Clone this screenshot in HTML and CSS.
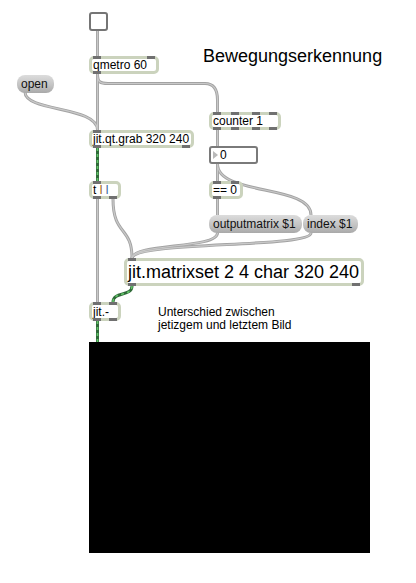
FILE: index.html
```html
<!DOCTYPE html>
<html>
<head>
<meta charset="utf-8">
<link rel="stylesheet" href="styles.css">
</head>
<body>
<div class="patch">
  <svg class="cords" width="416" height="583" viewBox="0 0 416 583">
    <g class="gray">
      <path d="M97.5 31 L97.5 56"/>
      <path d="M97.5 74 L97.5 130"/>
      <path d="M97.5 74 C97.5 82 100 83.5 108 83.5 L205 83.5 C214 83.5 217.5 90 217.5 100 L217.5 112"/>
      <path d="M25 92 C25 112 97.5 106 97.5 130"/>
      <path d="M97.5 199 L97.5 302"/>
      <path d="M113 199 C113 236 132 226 132 258"/>
      <path d="M217.5 130 L217.5 146"/>
      <path d="M217.5 164 L217.5 181"/>
      <path d="M217.5 164 C217.5 196 311 184 311 215"/>
      <path d="M217.5 199 L217.5 215"/>
      <path d="M217.5 233 C217.5 249 133 243 132 258"/>
      <path d="M311 233 C311 248 136 241 132 258"/>
    </g>
    <g class="gray-hi">
      <path d="M97.5 31 L97.5 56"/>
      <path d="M97.5 74 L97.5 130"/>
      <path d="M97.5 74 C97.5 82 100 83.5 108 83.5 L205 83.5 C214 83.5 217.5 90 217.5 100 L217.5 112"/>
      <path d="M25 92 C25 112 97.5 106 97.5 130"/>
      <path d="M97.5 199 L97.5 302"/>
      <path d="M113 199 C113 236 132 226 132 258"/>
      <path d="M217.5 130 L217.5 146"/>
      <path d="M217.5 164 L217.5 181"/>
      <path d="M217.5 164 C217.5 196 311 184 311 215"/>
      <path d="M217.5 199 L217.5 215"/>
      <path d="M217.5 233 C217.5 249 133 243 132 258"/>
      <path d="M311 233 C311 248 136 241 132 258"/>
    </g>
    <g class="green">
      <path d="M97.5 148 L97.5 181"/>
      <path d="M132 286 C132 297 113 291 113 302"/>
      <path d="M97.5 321 L97.5 342"/>
    </g>
    <g class="green-hi">
      <path d="M97.5 148 L97.5 181"/>
      <path d="M132 286 C132 297 113 291 113 302"/>
      <path d="M97.5 321 L97.5 342"/>
    </g>
  </svg>

  <div class="toggle n-toggle"></div>

  <div class="title">Bewegungserkennung</div>

  <div class="obj n-qmetro"><span>qmetro 60</span><i class="in l"></i><i class="in r"></i><i class="out l"></i></div>

  <div class="msg n-open"><span>open</span></div>

  <div class="obj n-counter"><span>counter 1</span>
    <i class="in l"></i><i class="in c1"></i><i class="in c2"></i><i class="in r"></i>
    <i class="out l"></i><i class="out c1"></i><i class="out c2"></i><i class="out r"></i>
  </div>

  <div class="obj n-grab"><span>jit.qt.grab 320 240</span><i class="in l"></i><i class="out l"></i><i class="out r"></i></div>

  <div class="num n-num"><b class="tri"></b><span>0</span></div>

  <div class="obj n-t"><span>t <em class="o">l</em> <em class="b">l</em></span><i class="in l"></i><i class="out l"></i><i class="out r"></i></div>

  <div class="obj n-eq"><span>== 0</span><i class="in l"></i><i class="in r"></i><i class="out l"></i></div>

  <div class="msg n-outm"><span>outputmatrix $1</span></div>
  <div class="msg n-index"><span>index $1</span></div>

  <div class="obj big n-mset"><span>jit.matrixset 2 4 char 320 240</span><i class="in l"></i><i class="out l"></i><i class="out r"></i></div>

  <div class="obj n-minus"><span>jit.-</span><i class="in l"></i><i class="in r"></i><i class="out l"></i><i class="out r"></i></div>

  <div class="comment">Unterschied zwischen<br>jetizgem und letztem Bild</div>

  <div class="pwindow"></div>
</div>
</body>
</html>
```
FILE: styles.css
```css
html, body {
  margin: 0;
  padding: 0;
  background: #ffffff;
}
body {
  font-family: "Liberation Sans", Arial, sans-serif;
  color: #000;
}
.patch {
  position: relative;
  width: 416px;
  height: 583px;
  overflow: hidden;
  background: #ffffff;
}
.cords {
  position: absolute;
  left: 0;
  top: 0;
}
.cords path {
  fill: none;
  stroke-linecap: butt;
}
.gray path { stroke: #a3a3a3; stroke-width: 3; }
.gray-hi path { stroke: #c9c9c9; stroke-width: 1.2; }
.green path { stroke: #2f6a38; stroke-width: 3; }
.green-hi path { stroke: #63c46a; stroke-width: 1.6; stroke-dasharray: 3 3; }

.toggle {
  position: absolute;
  box-sizing: border-box;
  width: 19px;
  height: 19px;
  border: 2px solid #757575;
  border-radius: 3px;
  background: #fff;
}
.n-toggle { left: 89px; top: 12px; }

.title {
  position: absolute;
  left: 203px;
  top: 47px;
  font-size: 18px;
  line-height: 18px;
  white-space: nowrap;
}

.obj {
  position: absolute;
  box-sizing: border-box;
  height: 18px;
  border: 3px solid #cbd3bd;
  border-radius: 5px;
  background: #fff;
  display: flex;
  align-items: center;
  padding: 0 0 0 1px;
  font-size: 12px;
  line-height: 12px;
  white-space: nowrap;
}
.obj span { position: relative; top: 0; }
.obj i {
  position: absolute;
  width: 8px;
  height: 3px;
  background: #707070;
}
.obj i.in { top: -3px; }
.obj i.out { bottom: -3px; }
.obj i.l { left: 1px; }
.obj i.r { right: 1px; }
.obj i.c1 { left: calc(33% - 3px); }
.obj i.c2 { left: calc(66% - 4px); }

.obj.big {
  height: 28px;
  font-size: 18px;
  line-height: 18px;
  padding-left: 1px;
}

.n-qmetro { left: 89px; top: 56px; width: 70px; }
.n-counter { left: 209px; top: 112px; width: 72px; }
.n-grab { left: 89px; top: 130px; width: 105px; }
.n-t { left: 89px; top: 181px; width: 32px; }
.n-eq { left: 209px; top: 181px; width: 34px; }
.n-mset { left: 124px; top: 258px; width: 240px; }
.n-minus { left: 89px; top: 302px; width: 32px; height: 19px; }

.n-t em { font-style: normal; }
.n-t em.o { color: #9a5a12; }
.n-t em.b { color: #2f5f9e; }

.msg {
  position: absolute;
  box-sizing: border-box;
  height: 18px;
  border-radius: 8px;
  background: linear-gradient(to bottom, #dcdcdc 0%, #c4c4c4 55%, #a9a9a9 100%);
  display: flex;
  align-items: center;
  padding-left: 4px;
  font-size: 12px;
  line-height: 12px;
  color: #111;
  white-space: nowrap;
}
.n-open { left: 17px; top: 75px; width: 37px; }
.n-outm { left: 209px; top: 215px; width: 93px; }
.n-index { left: 303px; top: 215px; width: 55px; }

.num {
  position: absolute;
  box-sizing: border-box;
  left: 209px;
  top: 146px;
  width: 49px;
  height: 18px;
  border: 2px solid #7a7a7a;
  border-radius: 3px;
  background: #fff;
  display: flex;
  align-items: center;
  gap: 2px;
  padding-left: 2px;
  font-size: 12px;
  line-height: 12px;
}
.num .tri {
  width: 0;
  height: 0;
  border-top: 4.5px solid transparent;
  border-bottom: 4.5px solid transparent;
  border-left: 5px solid #b9b9b9;
}

.comment {
  position: absolute;
  left: 158px;
  top: 306px;
  font-size: 12px;
  line-height: 13px;
  white-space: nowrap;
}

.pwindow {
  position: absolute;
  left: 89px;
  top: 342px;
  width: 281px;
  height: 211px;
  background: #000;
}
```
